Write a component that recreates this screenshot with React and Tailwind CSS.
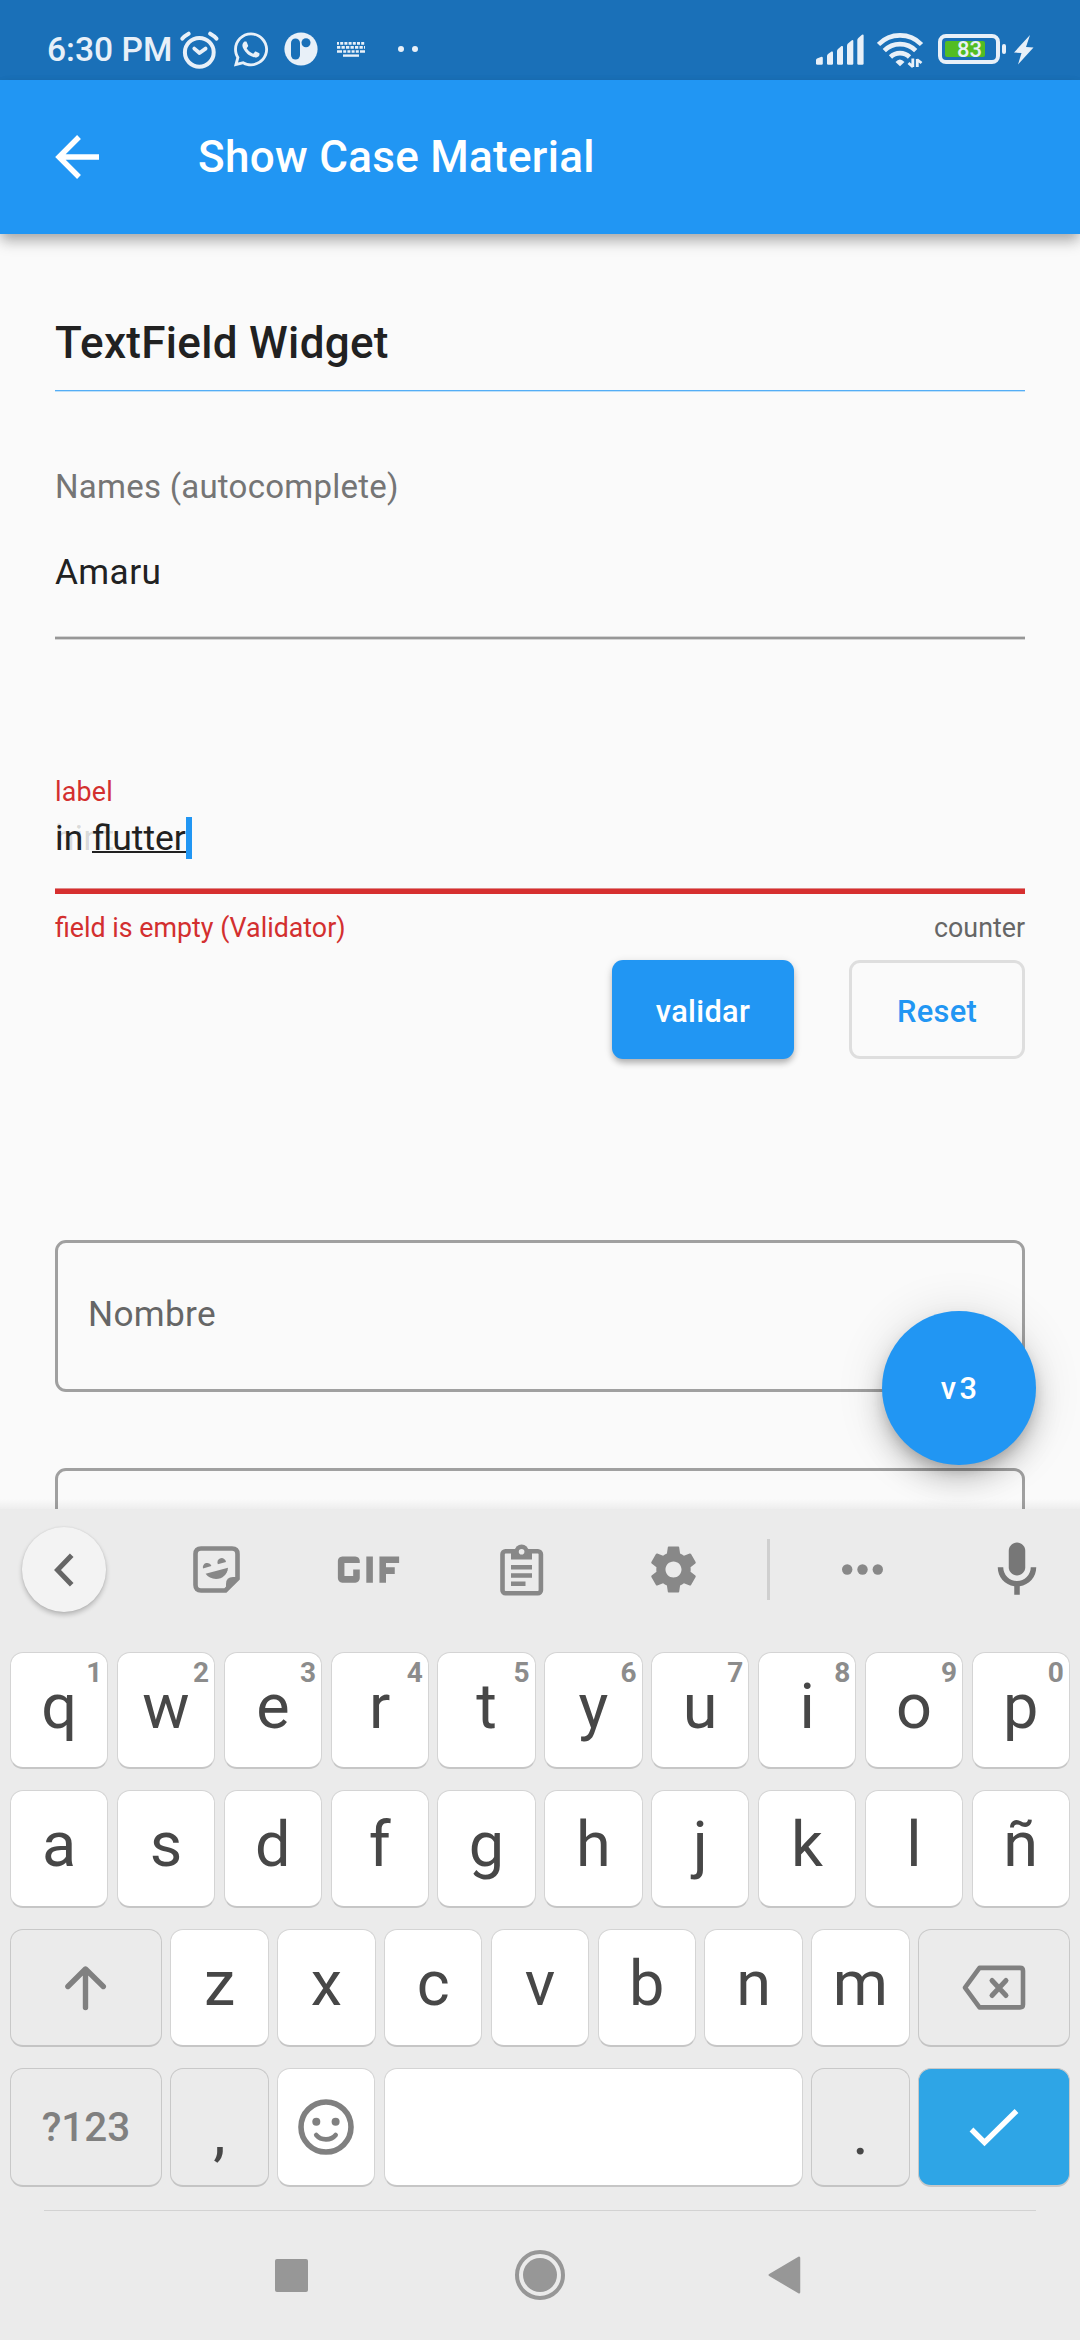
import { FaWhatsapp } from "react-icons/fa";
import { MdGif } from "react-icons/md";

const SETTINGS =
  "M19.43 12.98c.04-.32.07-.64.07-.98s-.03-.66-.07-.98l2.11-1.65c.19-.15.24-.42.12-.64l-2-3.46c-.12-.22-.39-.3-.61-.22l-2.49 1c-.52-.4-1.08-.73-1.69-.98l-.38-2.65C14.46 2.18 14.25 2 14 2h-4c-.25 0-.46.18-.49.42l-.38 2.65c-.61.25-1.17.59-1.69.98l-2.49-1c-.23-.09-.49 0-.61.22l-2 3.46c-.13.22-.07.49.12.64l2.11 1.65c-.04.32-.07.65-.07.98s.03.66.07.98l-2.11 1.65c-.19.15-.24.42-.12.64l2 3.46c.12.22.39.3.61.22l2.49-1c.52.4 1.08.73 1.69.98l.38 2.65c.03.24.24.42.49.42h4c.25 0 .46-.18.49-.42l.38-2.65c.61-.25 1.17-.59 1.69-.98l2.49 1c.23.09.49 0 .61-.22l2-3.46c.12-.22.07-.49-.12-.64l-2.11-1.65zM12 15.5c-1.93 0-3.5-1.57-3.5-3.5s1.57-3.5 3.5-3.5 3.5 1.57 3.5 3.5-1.57 3.5-3.5 3.5z";

function StatusBar() {
  return (
    <div className="flex h-[80px] shrink-0 items-start bg-[#1a70b8] pl-[47px] text-[#e8f0f8]">
      <span className="mt-[30px] w-[133px] text-[33.600px] leading-[40px] font-medium whitespace-pre">6:30 PM</span>
      {/* alarm */}
      <svg className="mt-[30px] h-[40px] w-[40px]" viewBox="0 0 40 40" fill="none" stroke="currentColor" strokeLinecap="round" strokeLinejoin="round">
        <circle cx="19.3" cy="22.3" r="14.4" strokeWidth="4" />
        <path d="M2.4 8.6 C4.2 6.4 6.2 5 8.6 3.7 M36.4 8.6 C34.6 6.4 32.6 5 30.2 3.7" strokeWidth="4" />
        <path d="M14.3 18.6 L19.5 23 L25.6 18.6" strokeWidth="3.8" />
      </svg>
      <FaWhatsapp className="mt-[30px] ml-[12px] h-[39px] w-[38px]" />
      {/* app badge */}
      <svg className="mt-[32px] ml-[14px] h-[34px] w-[34px]" viewBox="0 0 34 34">
        <circle cx="17" cy="17" r="16.6" fill="currentColor" />
        <rect x="7" y="6.5" width="9" height="21" rx="4.5" fill="#1a70b8" />
        <circle cx="22" cy="10.7" r="4.5" fill="#1a70b8" />
      </svg>
      {/* keyboard */}
      <svg className="mt-[42px] ml-[19px] h-[15px] w-[28px]" viewBox="0 0 28 15" fill="none" stroke="currentColor" strokeWidth="2.6">
        <path d="M0 1.4H28" strokeDasharray="3 1.2" strokeDashoffset="1" />
        <path d="M0 5.4H28" strokeDasharray="3.3 1.2" />
        <path d="M0 9.5H28" strokeDasharray="5 1.2 3 1.2 3 1.2 3 1.2 3 1.2 5 0" />
        <path d="M6 13.6H22" strokeWidth="2.4" />
      </svg>
      <svg className="mt-[46px] ml-[33px] h-[6px] w-[20px]" viewBox="0 0 20 6" fill="currentColor">
        <circle cx="3" cy="3" r="3" />
        <circle cx="17" cy="3" r="3" />
      </svg>
      {/* signal strength */}
      <svg className="mt-[34px] ml-[398px] h-[31px] w-[48px]" viewBox="0 0 48 31" fill="currentColor">
        <path d="M0 28V26Q0 25 1 24.5L5.5 22.8Q6.8 22.8 6.8 24V29.5Q6.800 30.800 5.500 30.800H1.500Q0 30.800 0 29.500Z" />
        <path d="M11 22Q11 21 12 20L15.500 17.600Q17 17 17 18.500V29.500Q17 30.800 15.700 30.800H12.300Q11 30.800 11 29.500Z" />
        <path d="M21 17Q21 16 22 15L25.500 12Q27 11.500 27 13V29.500Q27 30.800 25.700 30.800H22.300Q21 30.800 21 29.500Z" />
        <path d="M31 11.500Q31 10.500 32 9.500L35.500 6.400Q37.300 5.500 37.300 7V29.500Q37.300 30.800 36 30.800H32.300Q31 30.800 31 29.500Z" />
        <path d="M41.300 6Q41.300 5 42.300 4L46 .7Q47.600 0 47.600 1.500V29.500Q47.600 30.800 46.300 30.800H42.600Q41.300 30.800 41.300 29.500Z" />
      </svg>
      {/* wifi */}
      <svg className="mt-[32px] ml-[13px] h-[37px] w-[47px]" viewBox="0 0 47 37" fill="none" stroke="currentColor" strokeWidth="4.600">
        <path d="M1.500 12.500A30 30 0 0 1 44.500 12.500" />
        <path d="M7.300 18.700A22 22 0 0 1 38.700 18.700" />
        <path d="M13.500 25A13.500 13.500 0 0 1 32.500 25" />
        <path d="M18.500 30Q22.800 24.800 27.500 30L23 34.300Z" fill="currentColor" stroke="none" />
        <path d="M35.800 26.500V35M31.500 31L36 35M40.300 35V27M40 27.500L44.500 31" strokeWidth="2.800" />
      </svg>
      {/* battery */}
      <div className="mt-[34px] ml-[14px] flex h-[30px] w-[62px] items-center rounded-[8px] border-[4px] border-[#e8f0f8] pl-[3px]">
        <div className="relative h-[16px] w-[40px] rounded-[2px] bg-[#52bd23]">
          <span className="absolute top-[-2px] left-[12px] text-[22px] leading-[22px] font-medium">83</span>
        </div>
      </div>
      <div className="mt-[44px] ml-[2px] h-[10px] w-[4px] rounded-[2px] bg-[#e8f0f8]" />
      <svg className="mt-[35px] ml-[8px] h-[30px] w-[20px]" viewBox="0 0 20 30" fill="currentColor">
        <path d="M16 0L0 17.500L7.500 18L4 29.500L19.500 12.500L12 12Z" />
      </svg>
    </div>
  );
}

function AppBar() {
  return (
    <div className="relative z-10 flex h-[154px] shrink-0 items-start bg-[#2196f3] pl-[55px] text-white shadow-[0_6px_12px_-2px_rgba(0,0,0,0.24),0_9px_14px_0_rgba(0,0,0,0.14)]">
      <svg className="mt-[55px] h-[45px] w-[45px]" viewBox="0 0 45 45" fill="none" stroke="currentColor" strokeWidth="5.400">
        <path d="M44 22H4M24 2L4 22L24 42" />
      </svg>
      <h1 className="mt-[47px] ml-[98px] text-[44px] leading-[60px] font-medium tracking-[0.3px]">Show Case Material</h1>
    </div>
  );
}

function Content() {
  return (
    <div className="relative flex h-[1275px] shrink-0 flex-col overflow-hidden bg-[#fafafa] px-[55px] *:shrink-0">
      <h2 className="mt-[79px] text-[44px] leading-[60px] font-medium tracking-[0.3px] text-[#212121]">TextField Widget</h2>
      <div className="mt-[17px] h-[2px] border-b border-[#c0e0f8] bg-[#54aef6]" />

      <div className="mt-[75px] text-[33px] leading-[40px] tracking-[0.25px] text-[#757575]">Names (autocomplete)</div>
      <div className="mt-[45px] text-[35.2px] leading-[40px] tracking-[0.4px] text-[#212121]">Amaru</div>
      <div className="mt-[44px] h-[4px] border-y border-[#d4d4d4] bg-[#979797]" />

      <div className="mt-[132px] text-[26.8px] leading-[40px] tracking-[0.2px] text-[#d32f2f]">label</div>
      <div className="relative mt-[6px] flex h-[40px] text-[35.500px] leading-[40px] text-[#212121]">
        <span className="absolute top-0 left-0 text-black/14">hint</span>
        <span className="relative whitespace-pre">in </span>
        <span className="relative h-[35px] border-b-[2px] border-[#212121]">flutter</span>
        <span className="relative mt-[-1px] h-[42px] w-[6px] bg-[#2196f3]" />
      </div>
      <div className="mt-[30px] h-[6px] border-t border-[#e08a8a] bg-[#d62f2f]" />
      <div className="mt-[14px] flex justify-between text-[26.800px] leading-[40px]">
        <span className="text-[#d32f2f]">field is empty (Validator)</span>
        <span className="text-[#666666]">counter</span>
      </div>

      <div className="mt-[12px] flex justify-end gap-[55px] text-[30.800px] leading-[40px] font-medium tracking-[0.3px]">
        <button className="h-[99px] w-[182px] rounded-[11px] bg-[#2196f3] pt-[4px] text-white shadow-[0_5px_6px_-1px_rgba(0,0,0,0.22),0_2px_8px_0_rgba(0,0,0,0.14)]">validar</button>
        <button className="h-[99px] w-[176px] rounded-[11px] border-[3px] border-[#dedede] pt-[4px] text-[#2196f3]">Reset</button>
      </div>

      <div className="mt-[181px] h-[152px] rounded-[11px] border-[3px] border-[#a0a0a0] pt-[51px] pl-[30px] text-[35.200px] leading-[40px] tracking-[0.3px] text-[#666666]">Nombre</div>
      <div className="mt-[76px] h-[152px] rounded-[11px] border-[3px] border-[#a0a0a0]" />

      <button className="absolute top-[1077px] left-[882px] h-[154px] w-[154px] rounded-full bg-[#2196f3] pt-[2px] pl-[3px] text-[30.800px] leading-[40px] font-medium tracking-[3.300px] text-white shadow-[0_8px_14px_-3px_rgba(0,0,0,0.2),0_16px_28px_0_rgba(0,0,0,0.16),0_3px_50px_0_rgba(0,0,0,0.12)]">v3</button>
      <div className="absolute bottom-0 left-0 h-[10px] w-full bg-linear-to-b from-transparent to-black/5" />
    </div>
  );
}

function Toolbar() {
  return (
    <div className="flex h-[143px] shrink-0 items-start pl-[22px] text-[#888888]">
      <div className="mt-[18px] flex h-[85px] w-[84px] items-center justify-center rounded-full bg-[#f3f3f3] shadow-[0_3px_5px_0_rgba(0,0,0,0.22),0_0_2px_0_rgba(0,0,0,0.1)]">
        <svg className="h-[34px] w-[20px]" viewBox="0 0 20 34" fill="none" stroke="#666666" strokeWidth="5">
          <path d="M17.700 2.200L3.500 17L17.700 31.800" />
        </svg>
      </div>
      {/* sticker */}
      <svg className="mt-[37px] ml-[87px] h-[47px] w-[47px]" viewBox="0 0 47 47" fill="none" stroke="currentColor">
        <path d="M8 2.500H39Q44.500 2.500 44.500 8V32.500L32.500 44.500H8Q2.500 44.500 2.500 39V8Q2.500 2.500 8 2.500Z" strokeWidth="4.600" />
        <g fill="currentColor" stroke="none">
          <path d="M46 31L33 46V38Q33 31 40 31Z" />
          <path d="M10 22.500A4.300 4.300 0 1 1 18.400 20.100Z" />
          <path d="M24.800 18.200A4.300 4.300 0 1 1 33 16Z" />
          <path d="M12.600 27.800L35 21.800C34.500 28.500 29.500 33 23 33C18.500 33 15 31 12.600 27.800Z" />
        </g>
      </svg>
      <MdGif className="mt-[8px] ml-[76px] h-[105px] w-[105px]" />
      {/* clipboard */}
      <svg className="mt-[35px] ml-[79px] h-[52px] w-[44px]" viewBox="0 0 44 52" fill="none" stroke="currentColor">
        <rect x="2.500" y="7.300" width="38.400" height="42" rx="3" strokeWidth="4.600" />
        <path d="M11 5H32V15.500H11Z" fill="currentColor" stroke="none" />
        <circle cx="21.600" cy="7.500" r="7" fill="currentColor" stroke="none" />
        <circle cx="21.600" cy="7.800" r="2.800" fill="#ebebeb" stroke="none" />
        <path d="M11 23.200H32M11 31.500H32M11 39.700H25.500" strokeWidth="4.400" />
      </svg>
      <svg className="mt-[33px] ml-[102px] h-[55px] w-[55px]" viewBox="0 0 24 24" fill="currentColor">
        <path d={SETTINGS} />
      </svg>
      <div className="mt-[30px] ml-[66px] h-[61px] w-[3px] bg-[#cfcfcf]" />
      <svg className="mt-[55px] ml-[72px] h-[11px] w-[41px]" viewBox="0 0 41 11" fill="currentColor">
        <circle cx="5.200" cy="5.500" r="5.200" />
        <circle cx="20.500" cy="5.500" r="5.200" />
        <circle cx="35.800" cy="5.500" r="5.200" />
      </svg>
      <svg className="mt-[28px] ml-[101px] h-[66px] w-[66px] text-[#777777]" viewBox="0 0 24 24" fill="currentColor">
        <path d="M12 14c1.660 0 3-1.340 3-3V5c0-1.660-1.340-3-3-3S9 3.340 9 5v6c0 1.660 1.340 3 3 3z" />
        <path d="M17 11c0 2.760-2.240 5-5 5s-5-2.240-5-5H5c0 3.530 2.610 6.430 6 6.920V21h2v-3.080c3.390-.49 6-3.390 6-6.920h-2z" />
      </svg>
    </div>
  );
}

const FACE = "relative flex h-full justify-center rounded-[13px] border border-b-[2px] ";
const WHITE = FACE + "border-[#d4d4d4] border-b-[#c6c6c6] bg-white text-[#474747]";
const GRAY = FACE + "border-[#c8c8c8] border-b-[#c4c4c4] bg-[#ebebeb] text-[#808080]";

function Letter({ children, hint }) {
  return (
    <div className={WHITE + " w-[98.3px] shrink-0 pt-[22px] text-[63px] leading-[63px]"}>
      {children}
      {hint && <span className="absolute top-[6px] right-[5px] text-[28px] leading-[28px] font-bold text-[#8c8c8c]">{hint}</span>}
    </div>
  );
}

const TOP = ["q", "w", "e", "r", "t", "y", "u", "i", "o", "p"];
const HOME = ["a", "s", "d", "f", "g", "h", "j", "k", "l", "ñ"];
const LOW = ["z", "x", "c", "v", "b", "n", "m"];

function Keyboard() {
  return (
    <div className="relative flex h-[831px] shrink-0 flex-col bg-[#ebebeb]">
      <Toolbar />
      <div className="flex flex-col gap-[21px] px-[10px]">
        <div className="flex h-[117px] justify-between">
          {TOP.map((k, i) => (
            <Letter key={k} hint={String((i + 1) % 10)}>{k}</Letter>
          ))}
        </div>
        <div className="flex h-[118px] justify-between">
          {HOME.map((k) => (
            <Letter key={k}>{k}</Letter>
          ))}
        </div>
        <div className="flex h-[118px] gap-[8.500px]">
          <div className={GRAY + " flex-1"}>
            <svg className="mt-[35px] h-[46px] w-[42px]" viewBox="0 0 42 46" fill="none" stroke="currentColor" strokeWidth="5.400" strokeLinecap="round" strokeLinejoin="round">
              <path d="M20.500 42.500V4.500M2.900 21.500L20.500 4L38.300 21.500" />
            </svg>
          </div>
          {LOW.map((k) => (
            <Letter key={k}>{k}</Letter>
          ))}
          <div className={GRAY + " flex-1"}>
            <svg className="mt-[35px] h-[46px] w-[64px]" viewBox="0 0 64 46" fill="none" stroke="currentColor" strokeLinecap="round" strokeLinejoin="round">
              <path d="M17.500 2.900H58Q61 2.900 61 5.800V39.500Q61 42.400 58 42.400H17.500L3 22.600Z" strokeWidth="4.600" />
              <path d="M30 15.500L44 30.500M44 15.500L30 30.500" strokeWidth="5" />
            </svg>
          </div>
        </div>
        <div className="flex h-[119px] gap-[8.500px]">
          <div className={GRAY + " w-[151.800px] shrink-0 pt-[39px] text-[40.400px] leading-[40px] font-medium"}>?123</div>
          <div className={GRAY + " w-[98.300px] shrink-0 pt-[32px] text-[63px] leading-[63px] text-[#474747]!"}>,</div>
          <div className={WHITE + " w-[98.300px] shrink-0"}>
            <svg className="mt-[30px] h-[58px] w-[56px] text-[#808080]" viewBox="0 0 56 58" fill="none" stroke="currentColor" strokeLinecap="round">
              <circle cx="28" cy="28" r="25" strokeWidth="5.600" />
              <path d="M18.200 36C23 41.800 33 41.800 37.700 36" strokeWidth="4.600" />
              <circle cx="18.300" cy="22.800" r="4" fill="currentColor" stroke="none" />
              <circle cx="37.600" cy="22.800" r="4" fill="currentColor" stroke="none" />
            </svg>
          </div>
          <div className={WHITE + " flex-1"} />
          <div className={GRAY + " w-[98.300px] shrink-0 pt-[32px] text-[63px] leading-[63px] text-[#474747]!"}>.</div>
          <div className={FACE + "w-[151.800px] shrink-0 border-[#c8c8c8] bg-[#2ea5e6] text-white"}>
            <svg className="mt-[40px] h-[38px] w-[50px]" viewBox="0 0 50 38" fill="none" stroke="currentColor" strokeWidth="5.400">
              <path d="M2.500 20.500L15.500 33.500L47.500 2" />
            </svg>
          </div>
        </div>
      </div>
      <div className="mx-[44px] mt-[23px] h-px bg-[#d2d2d2]" />
      <div className="mt-[38px] flex h-[52px] items-center pl-[275px]">
        <div className="h-[33px] w-[33px] rounded-[2px] bg-[#979797]" />
        <div className="ml-[207px] flex h-[50px] w-[50px] items-center justify-center rounded-full border-[4px] border-[#979797]">
          <div className="h-[34px] w-[34px] rounded-full bg-[#979797]" />
        </div>
        <svg className="ml-[203px] h-[38px] w-[33px]" viewBox="0 0 33 38" fill="#979797" stroke="#979797" strokeWidth="2.500" strokeLinejoin="round">
          <path d="M1.800 19L31 1.800V36.200Z" />
        </svg>
      </div>
    </div>
  );
}

export default function App() {
  return (
    <div className="flex h-[2340px] w-[1080px] flex-col overflow-hidden font-['Roboto',sans-serif]">
      <StatusBar />
      <AppBar />
      <Content />
      <Keyboard />
    </div>
  );
}
